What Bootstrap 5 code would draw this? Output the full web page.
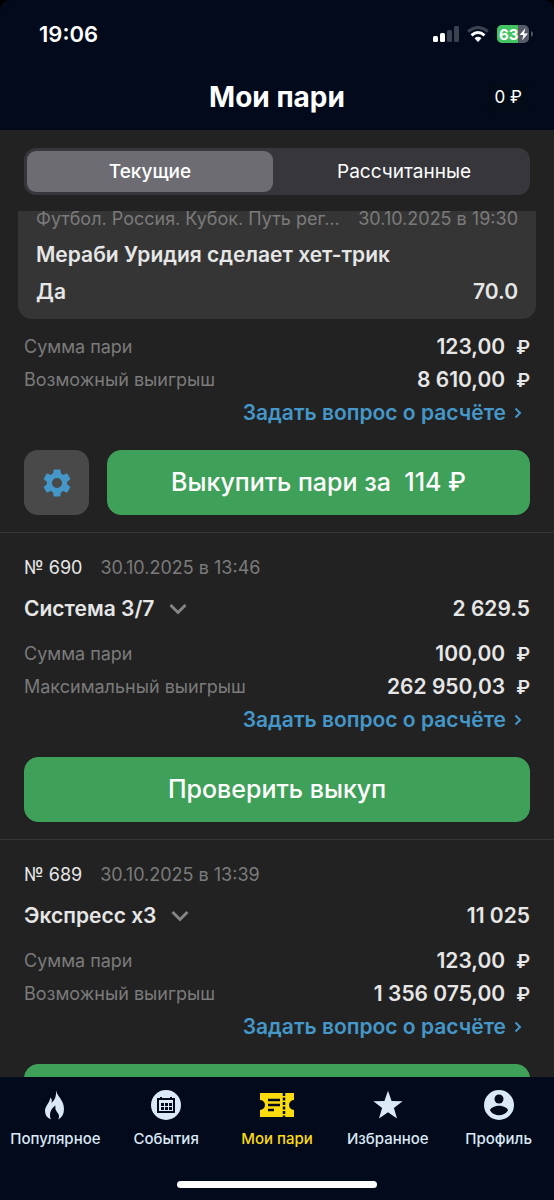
<!DOCTYPE html>
<html lang="ru" data-bs-theme="dark">
<head>
<meta charset="utf-8">
<meta name="viewport" content="width=device-width, initial-scale=1">
<title>Мои пари</title>
<link href="https://cdn.jsdelivr.net/npm/bootstrap@5.3.0/dist/css/bootstrap.min.css" rel="stylesheet">
<style>
  body { background: #222; color: #e6e6e6; font-family: Inter, "Noto Sans", sans-serif; }
  .screen { height: 100vh; background: #000; }
  .topbar { background: #020a1c; color: #fff; height: 130px; border-radius: 10px 10px 0 0; }
  .status { height: 68px; padding: 0 20px 0 39px; }
  .clock { font-size: 22px; font-weight: 600; }
  .title-row { display: grid; grid-template-columns: 1fr auto 1fr; padding: 0 24px; height: 60px; }
  .title-row h1 { font-size: 28px; font-weight: 700; }
  .balance { font-size: 17px; padding: 2px 8px; background: #030b19; color: #fff; border: 0; border-radius: 6px; }
  .content { background: #222; min-height: 0; }
  .segments { margin: 18px 24px 16px; padding: 3px; background: #37363b; border-radius: 12px; }
  .segments .nav-link { --bs-nav-link-padding-y: 0; line-height: 41px; border-radius: 9px; color: #fff; font-size: 19px; font-weight: 400; }
  .segments .nav-link.active { background: #6d6c72; color: #fff; font-weight: 500; }
  .bets { min-height: 0; overflow-y: auto; scrollbar-width: none; }
  .bets::-webkit-scrollbar { display: none; }
  .event { margin: 0 18px; padding: 0 18px 9px; background: #353535; border-radius: 0 0 14px 14px; }
  .event-meta { gap: 12px; line-height: 16px; padding-bottom: 5px; }
  .event-meta span { padding-bottom: 4px; }
  .muted { color: #7b7b7b; font-size: 18px; }
  .strong-line { font-size: 21px; font-weight: 600; line-height: 37px; }
  .bet { padding: 23px 24px 17px; border-bottom: 1px solid #353535; }
  .bet-first { padding-top: 11px; }
  .bet-no { font-size: 18px; }
  .bet-head { gap: 18px; line-height: 24px; }
  .bet-type { font-size: 21px; font-weight: 600; line-height: 28px; margin: 15px 0 14px; }
  .bet-type button { background: none; border: 0; padding: 0 0 0 15px; line-height: 1; }
  .sum { line-height: 33px; }
  .amount { font-size: 21px; font-weight: 600; }
  .amount span { margin-left: 11px; font-size: 19px; line-height: 1; }
  .ask { color: #4497c8; font-size: 21px; font-weight: 600; line-height: 33px; gap: 8px; padding-right: 8px; }
  .actions { margin-top: 21px; gap: 18px; }
  .btn-cashout { --bs-btn-bg: #3fa159; --bs-btn-color: #fff; --bs-btn-border-color: #3fa159; --bs-btn-hover-bg: #37924f; --bs-btn-hover-color: #fff; --bs-btn-active-bg: #37924f; --bs-btn-active-color: #fff; height: 65px; border-radius: 14px; font-size: 25px; font-weight: 500; white-space: pre; }
  .btn-gear { --bs-btn-bg: #494949; --bs-btn-hover-bg: #555; width: 65px; height: 65px; border: 0; border-radius: 14px; padding: 0; }
  .tabbar { background: #020a1c; padding-top: 13px; }
  .tabbar a { color: #dbe8f5; font-size: 15px; font-weight: 500; line-height: 20px; gap: 9px; text-decoration: none; }
  .tabbar a.active { color: #fddc0d; }
  .home-bar { width: 36%; height: 7px; border-radius: 4px; background: #fff; margin: 32px auto 12px; }
</style>
</head>
<body>
<svg class="d-none">
  <symbol id="down" viewBox="0 0 18 12"><path d="M1.500 2 9 9.500l7.500-7.500" fill="none" stroke="#858585" stroke-width="3"/></symbol>
  <symbol id="right" viewBox="0 0 8 12"><path d="M1.500 1.500 6 6l-4.500 4.500" fill="none" stroke="#4497c8" stroke-width="2"/></symbol>
</svg>
<div class="screen d-flex flex-column">
  <header class="topbar flex-shrink-0">
    <div class="status d-flex align-items-center justify-content-between">
      <span class="clock">19:06</span>
      <div class="d-flex align-items-center">
        <svg width="26" height="16" viewBox="0 0 26 16" fill="#fff"><rect x="0" y="10" width="5" height="6" rx="1.500"/><rect x="7" y="7" width="5" height="9" rx="1.500"/><g fill="#3b4250"><rect x="14" y="4" width="5" height="12" rx="1.500"/><rect x="21" y="0" width="5" height="16" rx="1.500"/></g></svg>
        <svg class="mx-2" width="22" height="16" viewBox="0 0 22 16" fill="none" stroke-width="3"><path d="M1 5.500Q11-2.500 21 5.500" stroke="#3b4250"/><path d="M4.500 9.300Q11 3.700 17.500 9.300" stroke="#fff"/><path d="M8 12.200Q11 10 14 12.200L11 15.500z" fill="#fff" stroke="#fff" stroke-width="1"/></svg>
        <svg width="37" height="18" viewBox="0 0 37 18"><defs><clipPath id="bat"><rect width="32" height="18" rx="5"/></clipPath></defs><g clip-path="url(#bat)"><rect width="32" height="18" fill="#555a66"/><rect width="21" height="18" fill="#43c463"/></g><path d="M34 6q2 1 2 3t-2 3z" fill="#555a66"/><text x="2" y="14.500" font-size="15" font-weight="700" fill="#fff">63</text><path d="M28.500 3 22.500 10h4l-1.500 5.500L31 8.500h-4z" fill="#fff"/></svg>
      </div>
    </div>
    <div class="title-row align-items-center">
      <span></span>
      <h1 class="m-0">Мои пари</h1>
      <button class="balance ms-auto" type="button">0 ₽</button>
    </div>
  </header>

  <main class="content flex-grow-1 d-flex flex-column">
    <nav class="segments nav nav-pills nav-fill flex-nowrap flex-shrink-0 gap-2">
      <button type="button" class="nav-link active w-50">Текущие</button>
      <button type="button" class="nav-link w-50">Рассчитанные</button>
    </nav>
    <div class="bets flex-grow-1">
      <section class="event">
        <div class="event-meta muted d-flex justify-content-between">
          <span class="text-truncate">Футбол. Россия. Кубок. Путь рег...</span>
          <span class="text-nowrap">30.10.2025 в 19:30</span>
        </div>
        <div class="strong-line">Мераби Уридия сделает хет-трик</div>
        <div class="strong-line d-flex justify-content-between"><span>Да</span><span>70.0</span></div>
      </section>

      <section class="bet bet-first">
        <div class="sum d-flex justify-content-between"><span class="muted">Сумма пари</span><span class="amount">123,00<span>₽</span></span></div>
        <div class="sum d-flex justify-content-between"><span class="muted">Возможный выигрыш</span><span class="amount">8 610,00<span>₽</span></span></div>
        <div class="d-flex justify-content-end"><a href="#" class="ask d-flex align-items-center text-decoration-none">Задать вопрос о расчёте<svg width="8" height="12"><use href="#right"/></svg></a></div>
        <div class="actions d-flex">
          <button type="button" class="btn btn-gear flex-shrink-0" aria-label="Настройки"><svg width="34" height="34" viewBox="0 0 24 24" fill="#4497c8"><path d="M19.140 12.940c.04-.3.06-.61.06-.94 0-.32-.02-.64-.07-.94l2.030-1.580a.49.49 0 0 0 .12-.61l-1.920-3.320a.488.488 0 0 0-.59-.22l-2.390.96c-.5-.38-1.030-.7-1.620-.94l-.36-2.540a.484.484 0 0 0-.48-.41h-3.840a.48.48 0 0 0-.47.41l-.36 2.540c-.59.24-1.130.57-1.620.94l-2.390-.96a.48.48 0 0 0-.59.22L2.740 8.870a.47.47 0 0 0 .12.61l2.030 1.580c-.05.3-.09.63-.09.94s.02.64.07.94l-2.030 1.580a.49.49 0 0 0-.12.61l1.920 3.320c.12.22.37.29.59.22l2.390-.96c.5.38 1.030.7 1.620.94l.36 2.540c.05.24.24.41.48.41h3.840c.24 0 .44-.17.47-.41l.36-2.540c.59-.24 1.130-.56 1.620-.94l2.390.96c.22.08.47 0 .59-.22l1.920-3.320a.47.47 0 0 0-.12-.61zM12 15.600a3.600 3.600 0 1 1 0-7.200 3.600 3.600 0 0 1 0 7.200z"/></svg></button>
          <button type="button" class="btn btn-cashout flex-grow-1">Выкупить пари за  114 ₽</button>
        </div>
      </section>

      <section class="bet">
        <div class="bet-head d-flex"><span class="bet-no">№ 690</span><span class="muted">30.10.2025 в 13:46</span></div>
        <div class="bet-type d-flex align-items-center"><span>Система 3/7</span><button type="button" aria-label="Показать события"><svg class="d-block" width="18" height="12"><use href="#down"/></svg></button><span class="ms-auto amount">2 629.5</span></div>
        <div class="sum d-flex justify-content-between"><span class="muted">Сумма пари</span><span class="amount">100,00<span>₽</span></span></div>
        <div class="sum d-flex justify-content-between"><span class="muted">Максимальный выигрыш</span><span class="amount">262 950,03<span>₽</span></span></div>
        <div class="d-flex justify-content-end"><a href="#" class="ask d-flex align-items-center text-decoration-none">Задать вопрос о расчёте<svg width="8" height="12"><use href="#right"/></svg></a></div>
        <div class="actions d-flex"><button type="button" class="btn btn-cashout flex-grow-1">Проверить выкуп</button></div>
      </section>

      <section class="bet">
        <div class="bet-head d-flex"><span class="bet-no">№ 689</span><span class="muted">30.10.2025 в 13:39</span></div>
        <div class="bet-type d-flex align-items-center"><span>Экспресс x3</span><button type="button" aria-label="Показать события"><svg class="d-block" width="18" height="12"><use href="#down"/></svg></button><span class="ms-auto amount">11 025</span></div>
        <div class="sum d-flex justify-content-between"><span class="muted">Сумма пари</span><span class="amount">123,00<span>₽</span></span></div>
        <div class="sum d-flex justify-content-between"><span class="muted">Возможный выигрыш</span><span class="amount">1 356 075,00<span>₽</span></span></div>
        <div class="d-flex justify-content-end"><a href="#" class="ask d-flex align-items-center text-decoration-none">Задать вопрос о расчёте<svg width="8" height="12"><use href="#right"/></svg></a></div>
        <div class="actions d-flex"><button type="button" class="btn btn-cashout flex-grow-1" aria-label="Проверить выкуп"></button></div>
      </section>
    </div>
  </main>

  <footer class="tabbar flex-shrink-0">
    <nav class="row row-cols-5 g-0 text-center">
      <a class="d-flex flex-column align-items-center" href="#"><svg width="30" height="30" viewBox="0 0 30 30" fill="currentColor"><path d="M16 .5C17 6 24 10 24 19c0 5-2 8.500-6 10.500 2-3 1-5-1-7.500-1.500-2-2-3.500-1.500-6.500-3 1.500-5.500 6-5.500 9.500 0 2 .5 3.500 1 4.500C7 28 5 25 5 21c0-5 4-7 5.500-13.500 1.500 1.500 1.500 3 1 5.500C15 10 16.500 6 16 .5z"/></svg>Популярное</a>
      <a class="d-flex flex-column align-items-center" href="#"><svg width="30" height="30" viewBox="0 0 30 30"><circle cx="15" cy="15" r="15" fill="currentColor"/><g fill="none" stroke="#020a1c" stroke-width="2"><rect x="7" y="9" width="16" height="13"/><path d="M10 7v2M20 7v2"/></g><g fill="#020a1c"><path d="M10 13h3v3h-3zM14 13h3v3h-3zM18 13h3v3h-3zM10 17h3v3h-3zM14 17h3v3h-3zM18 17h3v3h-3z"/></g></svg>События</a>
      <a class="active d-flex flex-column align-items-center" href="#"><svg width="34" height="30" viewBox="0 0 34 30"><path d="M0 3h34v7a5 5 0 0 0 0 10v7H0v-7a5 5 0 0 0 0-10z" fill="currentColor"/><g stroke="#020a1c" stroke-width="2.500"><path d="M8 10h12M8 15h12M8 20h6"/><path d="M24 3v24" stroke-dasharray="3 1.500"/></g></svg>Мои пари</a>
      <a class="d-flex flex-column align-items-center" href="#"><svg width="30" height="30" viewBox="0 0 30 30" fill="currentColor"><path d="m15 .8 3.600 10.200 11 .3-8.700 6.600 3.100 10.500-9-6.200-9 6.200 3.100-10.500L.4 11.300l11-.3z"/></svg>Избранное</a>
      <a class="d-flex flex-column align-items-center" href="#"><svg width="30" height="30" viewBox="0 0 30 30"><circle cx="15" cy="15" r="15" fill="currentColor"/><g fill="#020a1c"><circle cx="15" cy="9" r="4.500"/><path d="M6 20.500c0-3 6-4.700 9-4.700s9 1.700 9 4.700a10.800 10.800 0 0 1-18 0z"/></g></svg>Профиль</a>
    </nav>
    <div class="home-bar"></div>
  </footer>
</div>
<script src="https://cdn.jsdelivr.net/npm/bootstrap@5.3.0/dist/js/bootstrap.bundle.min.js"></script>
</body>
</html>
